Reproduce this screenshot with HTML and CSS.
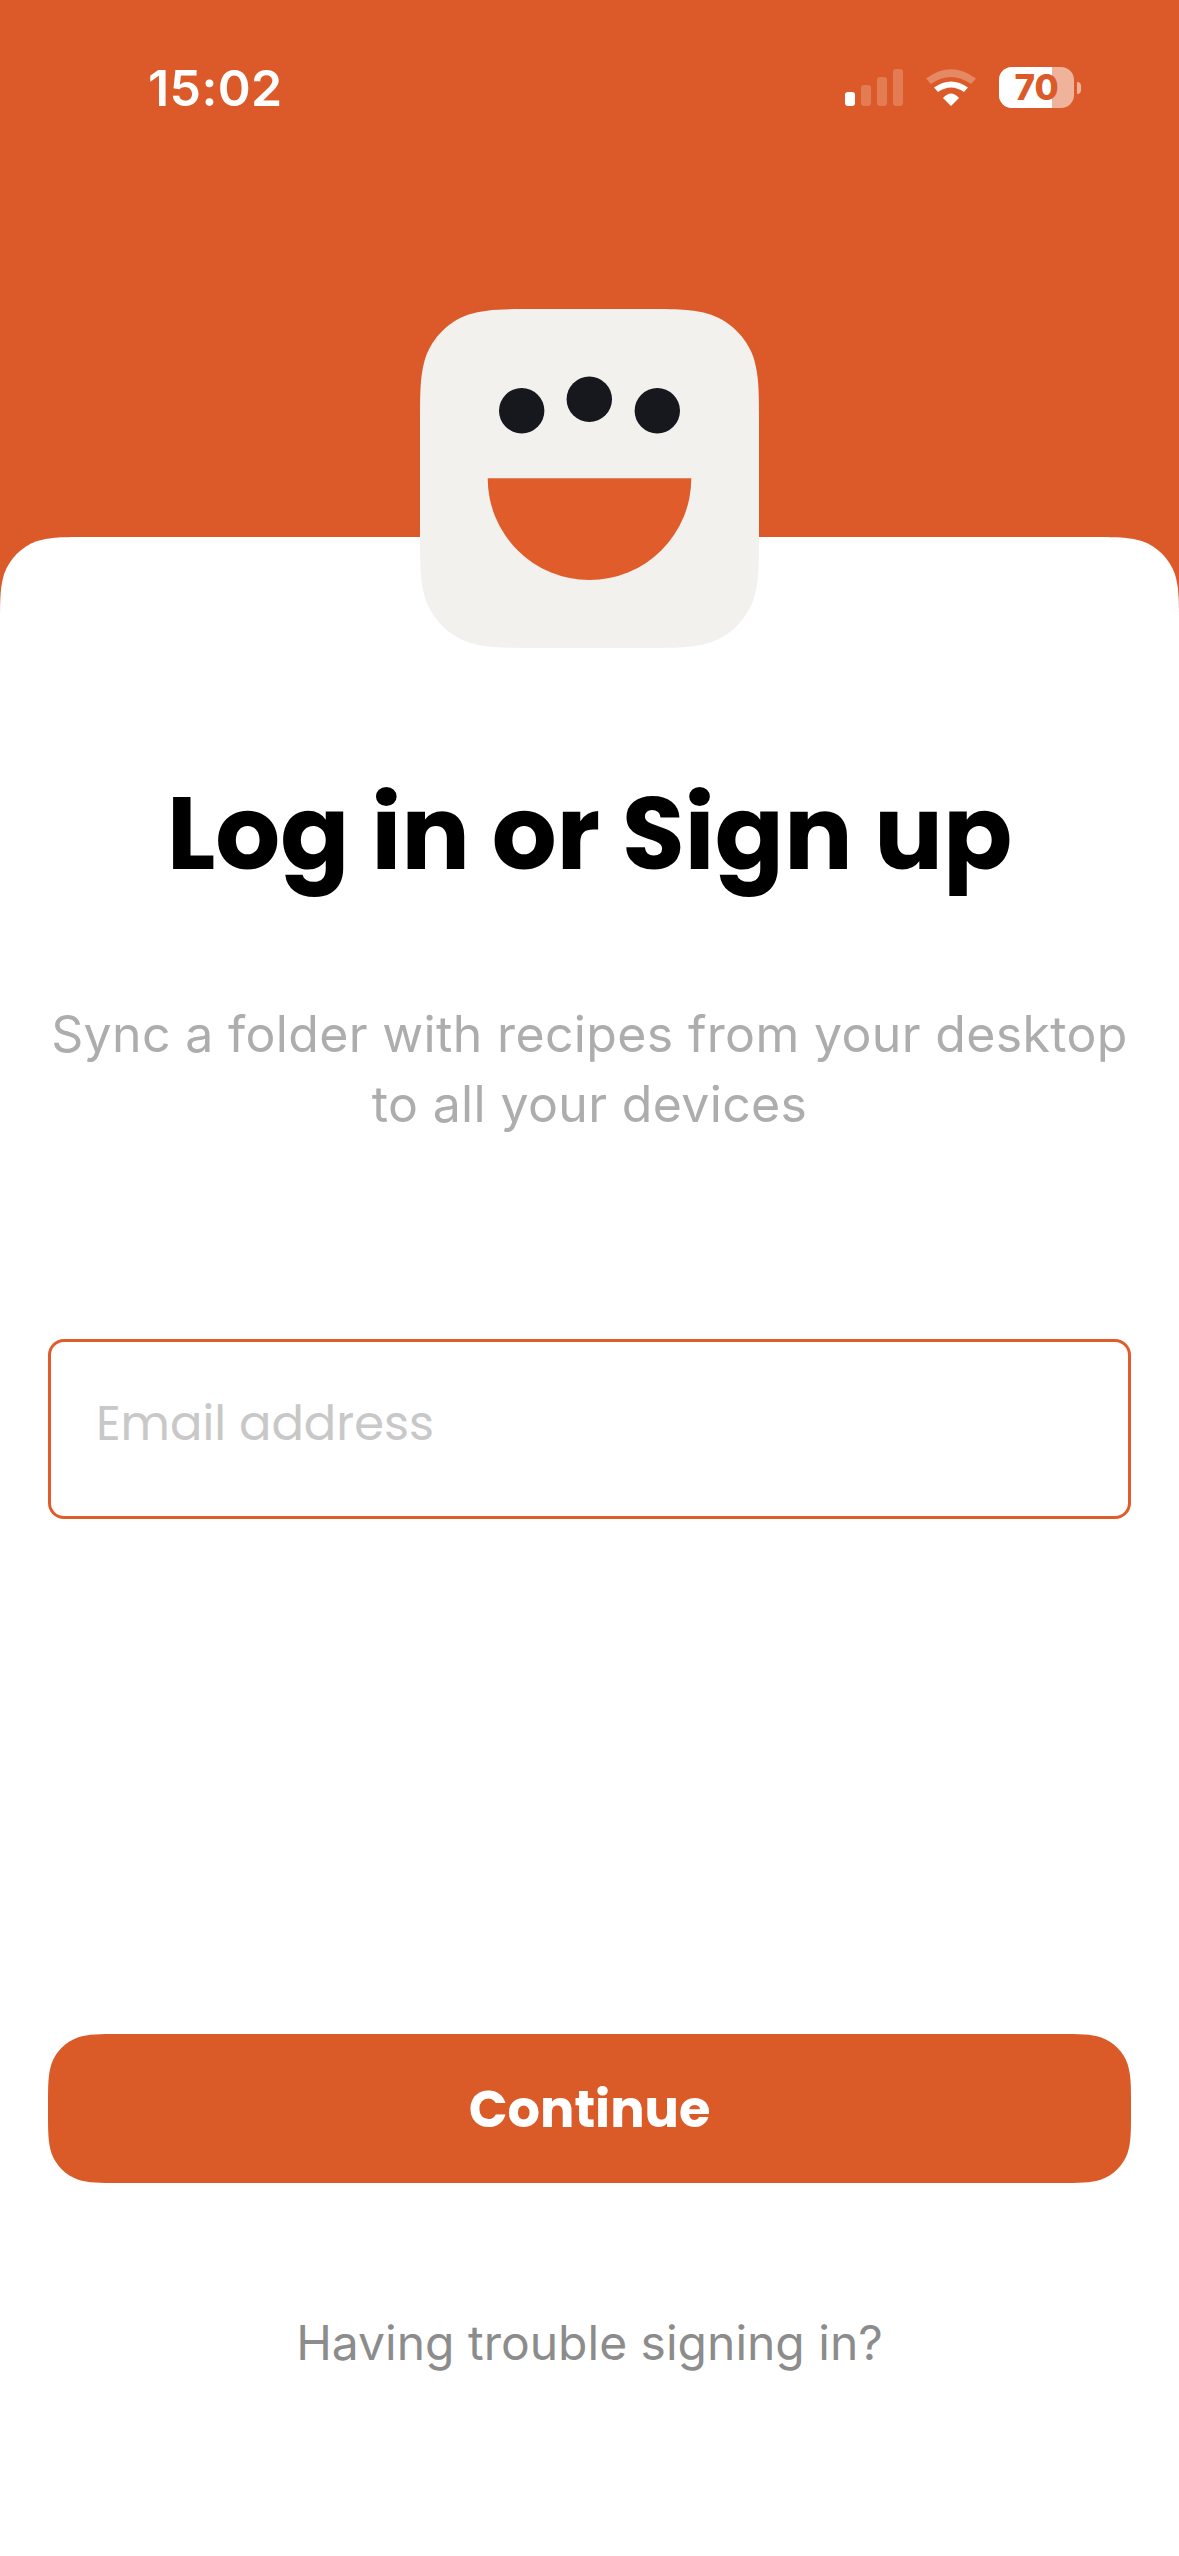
FILE: index.html
```html
<!DOCTYPE html>
<html lang="en">
<head>
<meta charset="utf-8">
<title>Log in</title>
<link rel="stylesheet" href="styles.css">
</head>
<body>
<div class="screen">
  <header class="top">
    <div class="status">
      <span class="time">15:02</span>
      <div class="status-icons">
        <svg class="signal" width="58" height="37" viewBox="0 0 58 37"><rect x="0" y="23" width="10" height="14" rx="3" fill="#fff"/><rect x="16" y="16" width="10" height="21" rx="3" fill="#fff" fill-opacity=".2"/><rect x="32" y="8" width="10" height="29" rx="3" fill="#fff" fill-opacity=".2"/><rect x="48" y="0" width="10" height="37" rx="3" fill="#fff" fill-opacity=".2"/></svg>
        <svg class="wifi" width="50" height="37" viewBox="0 0 50 37"><path d="M0 9.500 Q25 -9 50 9.500 L45 15 Q25 1 5 15 Z" fill="#fff" fill-opacity=".28"/><path d="M8 18.500 Q25 6.500 42 18.500 L38 23 Q25 14 12 23 Z" fill="#fff"/><path d="M17 29 Q25 20 33 29 L25 37 Z" fill="#fff"/></svg>
        <div class="battery"><div class="battery-body"><div class="battery-fill"></div><span class="battery-text">70</span></div><div class="battery-cap"></div></div>
      </div>
    </div>
  </header>
  <main class="sheet">
    <div class="logo">
      <svg width="339" height="339" viewBox="0 0 339 339"><path d="M115.900 0 H223.100 C256.500 0 273.200 0 291.100 5.700 C310.700 12.800 326.200 28.300 333.300 47.900 C339 65.800 339 82.500 339 115.900 V223.100 C339 256.500 339 273.200 333.300 291.100 C326.200 310.700 310.700 326.200 291.100 333.300 C273.200 339 256.500 339 223.100 339 H115.900 C82.500 339 65.800 339 47.900 333.300 C28.300 326.200 12.800 310.700 5.700 291.100 C0 273.200 0 256.500 0 223.100 V115.900 C0 82.500 0 65.800 5.700 47.900 C12.800 28.300 28.300 12.800 47.900 5.700 C65.800 0 82.500 0 115.900 0 Z" fill="#f2f1ee"/><circle cx="101.700" cy="101.700" r="22.700" fill="#16181e"/><circle cx="169.300" cy="90.300" r="22.700" fill="#16181e"/><circle cx="237.300" cy="101.700" r="22.700" fill="#16181e"/><path d="M67.700 169.300 H271.300 A101.800 101.800 0 0 1 67.700 169.300 Z" fill="#e05c2a"/></svg>
    </div>
    <h1 class="title">Log in or Sign up</h1>
    <p class="subtitle">Sync a folder with recipes from your desktop<br>to all your devices</p>
    <div class="field"><span class="placeholder">Email address</span></div>
    <button class="continue" type="button">Continue</button>
    <a class="trouble">Having trouble signing in?</a>
  </main>
</div>
</body>
</html>
```
FILE: styles.css
```css
* { box-sizing: border-box; }
html, body { margin: 0; padding: 0; }
body { width: 1179px; height: 2556px; overflow: hidden; background: #dc5a29; font-family: "Inter", "Liberation Sans", sans-serif; }
.screen { width: 1179px; height: 2556px; display: flex; flex-direction: column; }
.top { height: 537px; flex: none; }
.status { display: flex; justify-content: space-between; align-items: flex-start; padding: 58px 98px 0 148px; }
.time { color: #fff; font-size: 50px; font-weight: 600; line-height: 60px; letter-spacing: 0.4px; }
.status-icons { display: flex; align-items: flex-start; gap: 23px; padding-top: 11px; }
.signal, .wifi { display: block; }
.battery { display: flex; align-items: center; gap: 3px; margin-top: -2px; }
.battery-body { position: relative; width: 75px; height: 41px; border-radius: 13px; background: rgba(255,255,255,.54); overflow: hidden; display: flex; align-items: center; justify-content: center; }
.battery-fill { position: absolute; left: 0; top: 0; bottom: 0; width: 53px; background: #fff; }
.battery-text { position: relative; color: #dc5a29; font-size: 35px; font-weight: 800; line-height: 41px; }
.battery-cap { width: 4px; height: 12px; border-radius: 0 6px 6px 0; background: rgba(255,255,255,.54); }
.sheet { position: relative; flex: 1; display: flex; flex-direction: column; align-items: center; }
.sheet::before { content: ""; position: absolute; inset: 0; background: #fff; clip-path: path("M0 88.700 C0 63.100 0 50.400 4.300 36.600 C9.800 21.600 21.600 9.800 36.600 4.300 C50.400 0 63.100 0 88.700 0 H1090.300 C1115.900 0 1128.600 0 1142.400 4.300 C1157.400 9.800 1169.200 21.600 1174.700 36.600 C1179 50.400 1179 63.100 1179 88.700 V2019 H0 Z"); }
.sheet > * { position: relative; }
.logo { position: absolute; left: 420px; top: -228px; width: 339px; height: 339px; }
.logo svg { display: block; }
.title { margin: 237px 0 0; font-family: "Poppins", "Inter", sans-serif; font-size: 102px; font-weight: 700; line-height: 120px; color: #000; }
.subtitle { margin: 105px 0 0; text-align: center; color: #adadad; font-size: 50px; font-weight: 400; line-height: 70px; letter-spacing: 0.35px; }
.field { margin-top: 200px; width: 1083px; height: 180px; border: 3px solid #e05c2a; border-radius: 16px; display: flex; align-items: center; padding: 0 45px 11px; }
.placeholder { color: #c8c8c8; font-family: "Poppins", "Inter", sans-serif; font-size: 48px; }
.continue { margin-top: 515px; width: 1083px; height: 149px; border: 0; padding: 2px 0 0; background: #da5a28; clip-path: path("M71.800 0 H1011.200 C1031.800 0 1042.200 0 1053.300 3.500 C1065.500 7.900 1075.100 17.500 1079.500 29.700 C1083 40.800 1083 51.200 1083 71.800 V77.200 C1083 97.800 1083 108.200 1079.500 119.300 C1075.100 131.500 1065.500 141.100 1053.300 145.500 C1042.200 149 1031.800 149 1011.200 149 H71.800 C51.200 149 40.800 149 29.700 145.500 C17.500 141.100 7.900 131.500 3.500 119.300 C0 108.200 0 97.800 0 77.200 V71.800 C0 51.200 0 40.800 3.500 29.700 C7.900 17.500 17.500 7.900 29.700 3.500 C40.800 0 51.200 0 71.800 0 Z"); color: #fff; font-family: "Poppins", "Inter", sans-serif; font-size: 51px; font-weight: 700; }
.trouble { margin-top: 130px; color: #8c8c8c; font-size: 48px; font-weight: 400; line-height: 60px; }
```
